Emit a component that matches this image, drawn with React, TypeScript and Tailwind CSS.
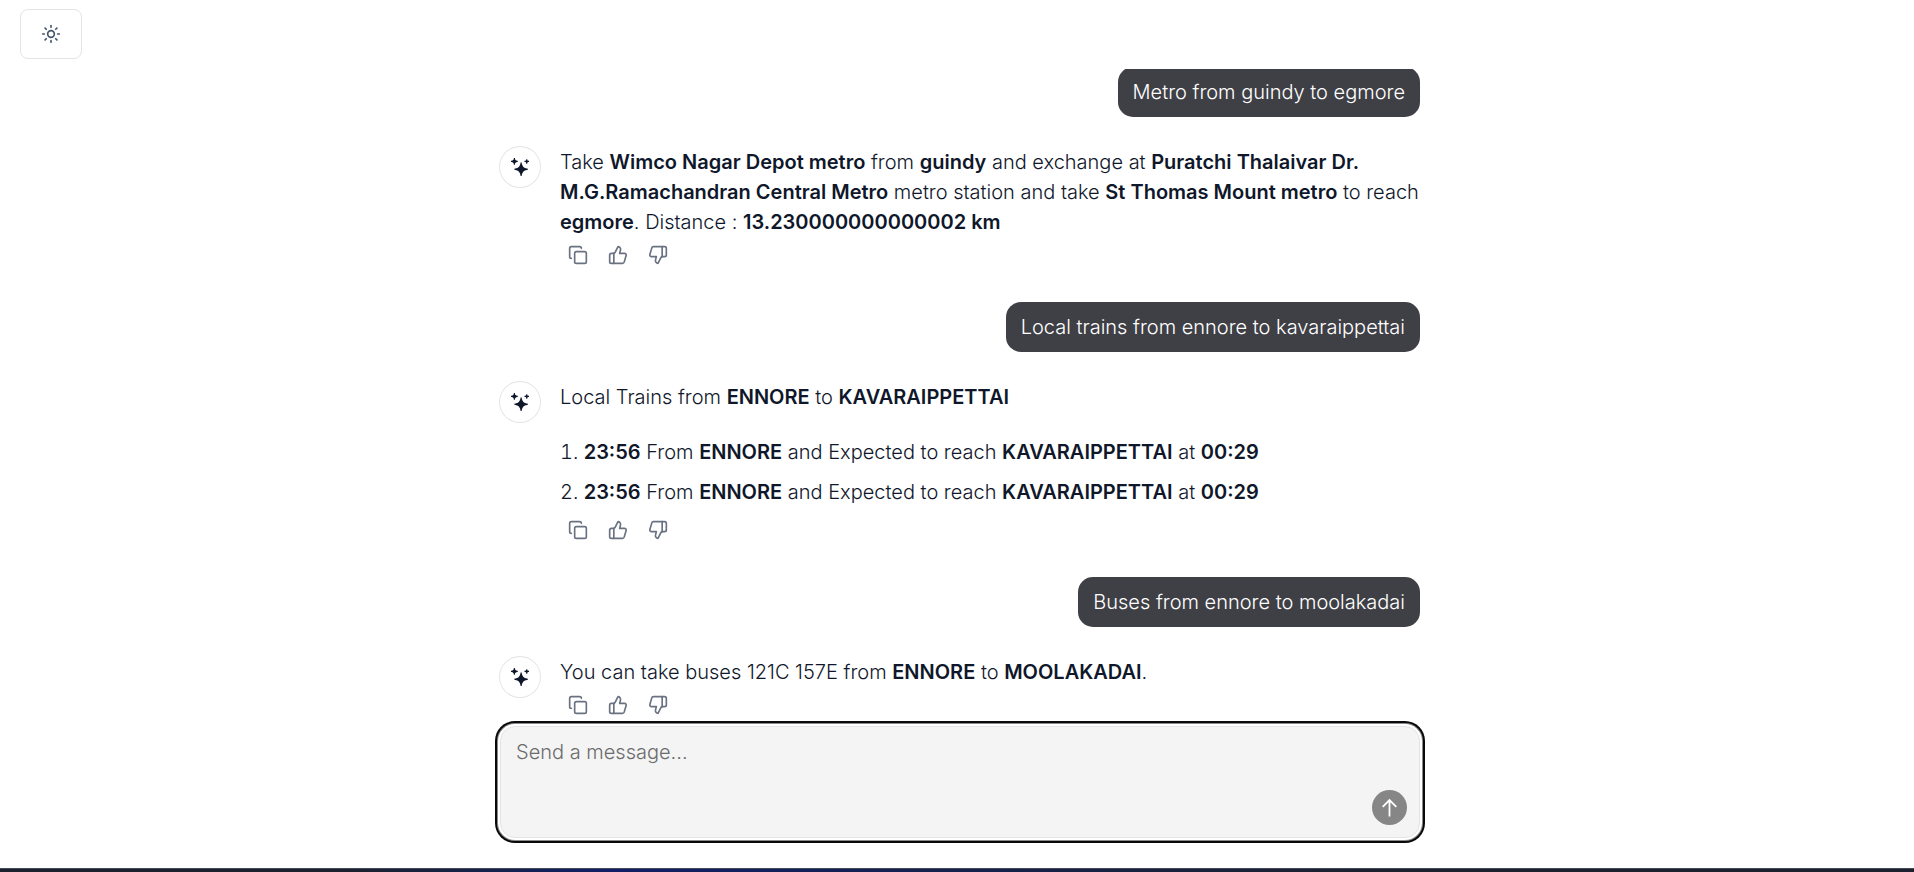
import type { ReactNode } from "react";
import { Copy, Sun, ThumbsDown, ThumbsUp } from "lucide-react";

function SparklesIcon() {
  return (
    <svg viewBox="0 0 16 16" className="size-[18px]" fill="currentColor" aria-hidden="true">
      <path d="M2.5 0.5V0H3.5V0.5C3.5 1.60457 4.39543 2.5 5.5 2.5H6V3V3.5H5.5C4.39543 3.5 3.5 4.39543 3.5 5.5V6H3H2.5V5.5C2.5 4.39543 1.60457 3.5 0.5 3.5H0V3V2.5H0.5C1.60457 2.5 2.5 1.60457 2.5 0.5Z" />
      <path d="M14.5 4.5V5H13.5V4.5C13.5 3.94772 13.0523 3.5 12.5 3.5H12V3V2.5H12.5C13.0523 2.5 13.5 2.05228 13.5 1.5V1H14H14.5V1.5C14.5 2.05228 14.9477 2.5 15.5 2.5H16V3V3.5H15.5C14.9477 3.5 14.5 3.94772 14.5 4.5Z" />
      <path d="M8.40706 4.92939L8.5 4H9.5L9.59294 4.92939C9.82973 7.29734 11.7027 9.17027 14.0706 9.40706L15 9.5V10.5L14.0706 10.5929C11.7027 10.8297 9.82973 12.7027 9.59294 15.0706L9.5 16H8.5L8.40706 15.0706C8.17027 12.7027 6.29734 10.8297 3.92939 10.5929L3 10.5V9.5L3.92939 9.40706C6.29734 9.17027 8.17027 7.29734 8.40706 4.92939Z" />
    </svg>
  );
}

function B({ children }: { children: ReactNode }) {
  return <strong className="font-semibold">{children}</strong>;
}

function UserMessage({ children }: { children: ReactNode }) {
  return (
    <div className="flex justify-end">
      <p className="rounded-[15px] bg-[#3f3f46] px-[15px] py-2.5 font-light text-white">{children}</p>
    </div>
  );
}

const actions = [
  { label: "Copy", Icon: Copy },
  { label: "Upvote", Icon: ThumbsUp },
  { label: "Downvote", Icon: ThumbsDown },
];

function AssistantMessage({ children }: { children: ReactNode }) {
  return (
    <div className="flex gap-5">
      <div className="flex size-10 shrink-0 items-center justify-center rounded-full ring-1 ring-zinc-200">
        <SparklesIcon />
      </div>
      <div className="flex min-w-0 flex-1 flex-col font-light">
        {children}
        <div className="flex gap-[5px] text-gray-500">
          {actions.map(({ label, Icon }) => (
            <button
              key={label}
              type="button"
              aria-label={label}
              className="flex size-[35px] items-center justify-center"
            >
              <Icon className="size-5" />
            </button>
          ))}
        </div>
      </div>
    </div>
  );
}

const trains = [
  { departs: "23:56", arrives: "00:29" },
  { departs: "23:56", arrives: "00:29" },
];

export default function App() {
  return (
    <div className="flex h-screen flex-col bg-white font-['Inter','Liberation_Sans',sans-serif] text-[20px] leading-[30px] text-slate-900">
      <header className="flex px-5 pt-[9px] pb-2.5">
        <button
          type="button"
          aria-label="Toggle theme"
          className="flex h-[50px] w-[62px] items-center justify-center rounded-lg border border-zinc-200 text-slate-600"
        >
          <Sun className="size-5" />
        </button>
      </header>

      <main className="flex min-h-0 flex-1 flex-col pl-1.5">
        <div className="flex min-h-0 flex-1 flex-col-reverse overflow-y-auto [scrollbar-width:none]">
          <div className="mx-auto flex w-full max-w-[960px] flex-col gap-[30px] px-5 pb-1">
            <UserMessage>Metro from guindy to egmore</UserMessage>
            <AssistantMessage>
              <p>
                Take <B>Wimco Nagar Depot metro</B> from <B>guindy</B> and exchange at{" "}
                <B>Puratchi Thalaivar Dr. M.G.Ramachandran Central Metro</B> metro station and take{" "}
                <B>St Thomas Mount metro</B> to reach <B>egmore</B>. Distance :{" "}
                <B>13.230000000000002 km</B>
              </p>
            </AssistantMessage>
            <UserMessage>Local trains from ennore to kavaraippettai</UserMessage>
            <AssistantMessage>
              <p>
                Local Trains from <B>ENNORE</B> to <B>KAVARAIPPETTAI</B>
              </p>
              <ol className="mt-5 list-inside list-decimal">
                {trains.map((train, i) => (
                  <li key={i} className="py-[5px]">
                    <B>{train.departs}</B> From <B>ENNORE</B> and Expected to reach{" "}
                    <B>KAVARAIPPETTAI</B> at <B>{train.arrives}</B>
                  </li>
                ))}
              </ol>
            </AssistantMessage>
            <UserMessage>Buses from ennore to moolakadai</UserMessage>
            <AssistantMessage>
              <p>
                You can take buses 121C 157E from <B>ENNORE</B> to <B>MOOLAKADAI</B>.
              </p>
            </AssistantMessage>
          </div>
        </div>

        <form className="mx-auto w-full max-w-[960px] px-5 pb-[30px]">
          <div className="relative flex">
            <textarea
              aria-label="Message"
              placeholder="Send a message..."
              className="h-28 w-full resize-none rounded-[15px] border border-zinc-200 bg-zinc-100 px-[15px] py-2.5 font-light shadow-[0_0_0_2px_#fff,0_0_0_3px_#8a8a8a,0_0_0_5px_#09090b] outline-none placeholder:text-[#6c6c6c]"
            />
            <button
              type="button"
              aria-label="Send"
              className="absolute right-[13px] bottom-[13px] flex size-[35px] items-center justify-center rounded-full bg-[#868686] text-white"
            >
              <svg viewBox="0 0 16 20" className="h-5 w-4" fill="none" stroke="currentColor" strokeWidth="1.8" aria-hidden="true">
                <path d="M7.5 18.5V2M0.7 8.8L7.5 2L14.3 8.8" />
              </svg>
            </button>
          </div>
        </form>
      </main>

      <footer className="h-1 border-t border-[#44465a] bg-linear-to-r from-[#1b212d] from-18% via-[#101f66] via-32% to-[#1b212d] to-72%" />
    </div>
  );
}
